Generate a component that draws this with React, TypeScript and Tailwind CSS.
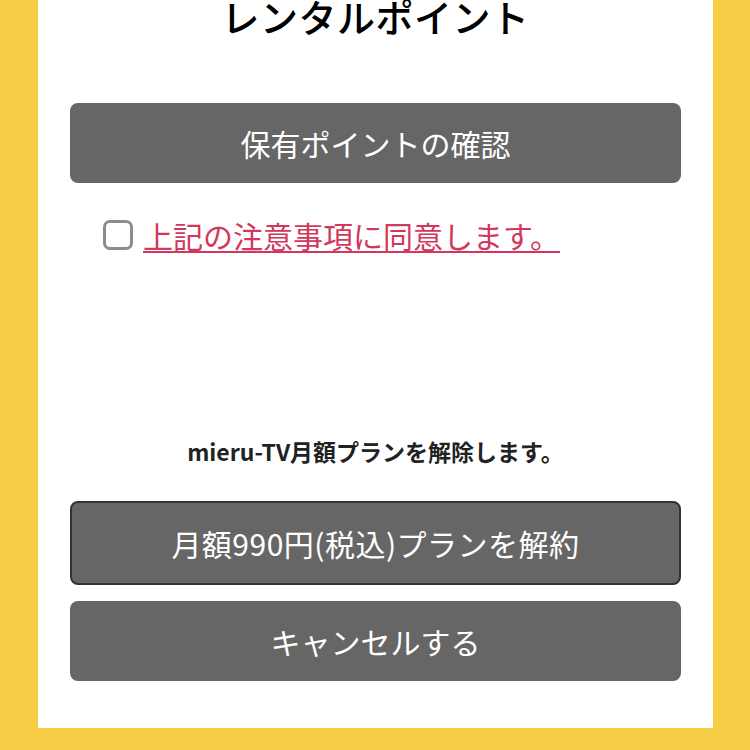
import React from 'react'

const font = { fontFamily: '"Noto Sans CJK JP", "Noto Sans", sans-serif' }

export default function App() {
  return (
    <div className="min-h-[750px] bg-[#f7cd46] pl-[38px] pr-[37px] pb-[22px] overflow-hidden" style={font}>
      <div className="bg-white px-[32px] pb-[47px]">
        <h1 className="-mt-[6px] text-center text-[38px] leading-[44px] font-medium text-black tracking-[0.5px]">
          レンタルポイント
        </h1>

        <button className="mt-[65px] flex h-[80px] w-full items-center justify-center rounded-[8px] bg-[#666666] text-[30px] text-white">
          保有ポイントの確認
        </button>

        <label className="mt-[37px] flex items-center gap-[10px] pl-[33px]">
          <span className="block h-[30px] w-[30px] rounded-[7px] border-[3px] border-[#8c8c8c] bg-white" />
          <span className="text-[30px] leading-[30px] text-[#d4375c] underline decoration-[2px] underline-offset-[3px]">
            上記の注意事項に同意します。
          </span>
        </label>

        <p className="mt-[186px] text-center text-[23px] font-semibold leading-[30px] text-[#222222]">
          mieru-TV月額プランを解除します。
        </p>

        <button className="mt-[35px] flex h-[84px] w-full items-center justify-center rounded-[8px] border-2 border-[#333333] bg-[#666666] text-[30px] tracking-[0.5px] text-white">
          月額990円(税込)プランを解約
        </button>

        <button className="mt-[16px] flex h-[80px] w-full items-center justify-center rounded-[8px] bg-[#666666] text-[30px] text-white">
          キャンセルする
        </button>
      </div>
    </div>
  )
}
